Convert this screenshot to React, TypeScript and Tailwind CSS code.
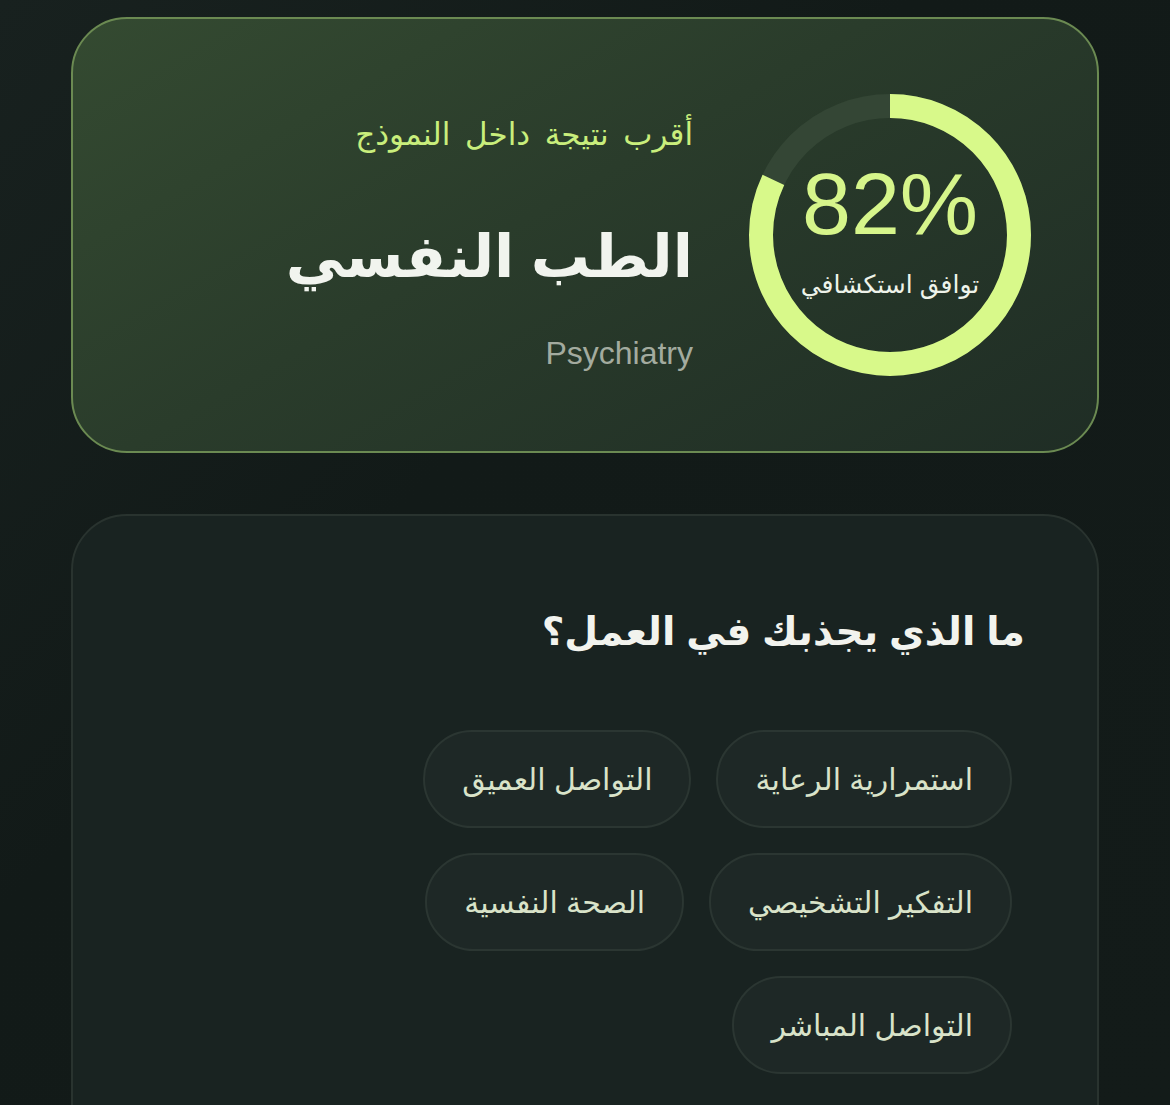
import React from "react";

const chips = [
  ["استمرارية الرعاية", "التواصل العميق"],
  ["التفكير التشخيصي", "الصحة النفسية"],
  ["التواصل المباشر"],
];

function Ring() {
  const r = 129;
  const c = 2 * Math.PI * r;
  const pct = 0.82;
  return (
    <div className="relative w-[282px] h-[282px] shrink-0">
      <svg width="282" height="282" viewBox="0 0 282 282" className="absolute inset-0">
        <circle cx="141" cy="141" r={r} fill="none" stroke="#344635" strokeWidth="24" />
        <circle
          cx="141"
          cy="141"
          r={r}
          fill="none"
          stroke="#d8f98a"
          strokeWidth="24"
          strokeDasharray={`${c * pct} ${c}`}
          transform="rotate(-90 141 141)"
        />
      </svg>
      <div className="absolute inset-0 flex flex-col items-center justify-center">
        <div className="text-[88px] leading-none text-[#d6f58b] mt-[-14px]" style={{ fontFamily: '"Liberation Sans", Arial, sans-serif' }}>
          82%
        </div>
        <div className="mt-[24px] text-[25px] leading-none text-[#eef3ea]">توافق استكشافي</div>
      </div>
    </div>
  );
}

export default function App() {
  return (
    <div
      dir="rtl"
      className="h-[1105px] w-full bg-[linear-gradient(135deg,#18211f_0%,#121a18_40%,#131b19_100%)] px-[71px] pt-[17px] overflow-hidden"
      style={{ fontFamily: '"Liberation Sans", "DejaVu Sans", "Noto Sans", sans-serif' }}
    >
      <div className="h-[436px] rounded-[56px] border-2 border-[#6b8a52] bg-[linear-gradient(150deg,#344a31_0%,#2a3c2b_45%,#1f2d25_100%)] flex items-center pr-[66px] gap-[56px]">
        <Ring />
        <div className="flex flex-col items-start pt-[18px]">
          <div className="text-[31px] [word-spacing:6px] leading-none text-[#c9ee7c]">أقرب نتيجة داخل النموذج</div>
          <div className="mt-[78px] text-[59px] font-bold leading-none text-[#f1f4ee]">الطب النفسي</div>
          <div dir="ltr" className="mt-[50px] text-[32px] leading-none text-[#a3ab9f]">Psychiatry</div>
        </div>
      </div>

      <div className="mt-[61px] h-[700px] rounded-[56px] border-2 border-[#29332f] bg-[#192321] pr-[72px] pl-[60px] pt-[96px]">
        <div className="text-[39px] font-bold leading-none text-[#f2f3ee]">ما الذي يجذبك في العمل؟</div>
        <div className="mt-[79px] flex flex-col gap-[25px] pr-[13px]">
          {chips.map((row, i) => (
            <div key={i} className="flex gap-[25px]">
              {row.map((t) => (
                <div
                  key={t}
                  className="h-[98px] rounded-full border-2 border-[#2b3632] bg-[#1e2826] px-[37px] flex items-center text-[30px] text-[#d9e3c9]"
                >
                  {t}
                </div>
              ))}
            </div>
          ))}
        </div>
      </div>
    </div>
  );
}
